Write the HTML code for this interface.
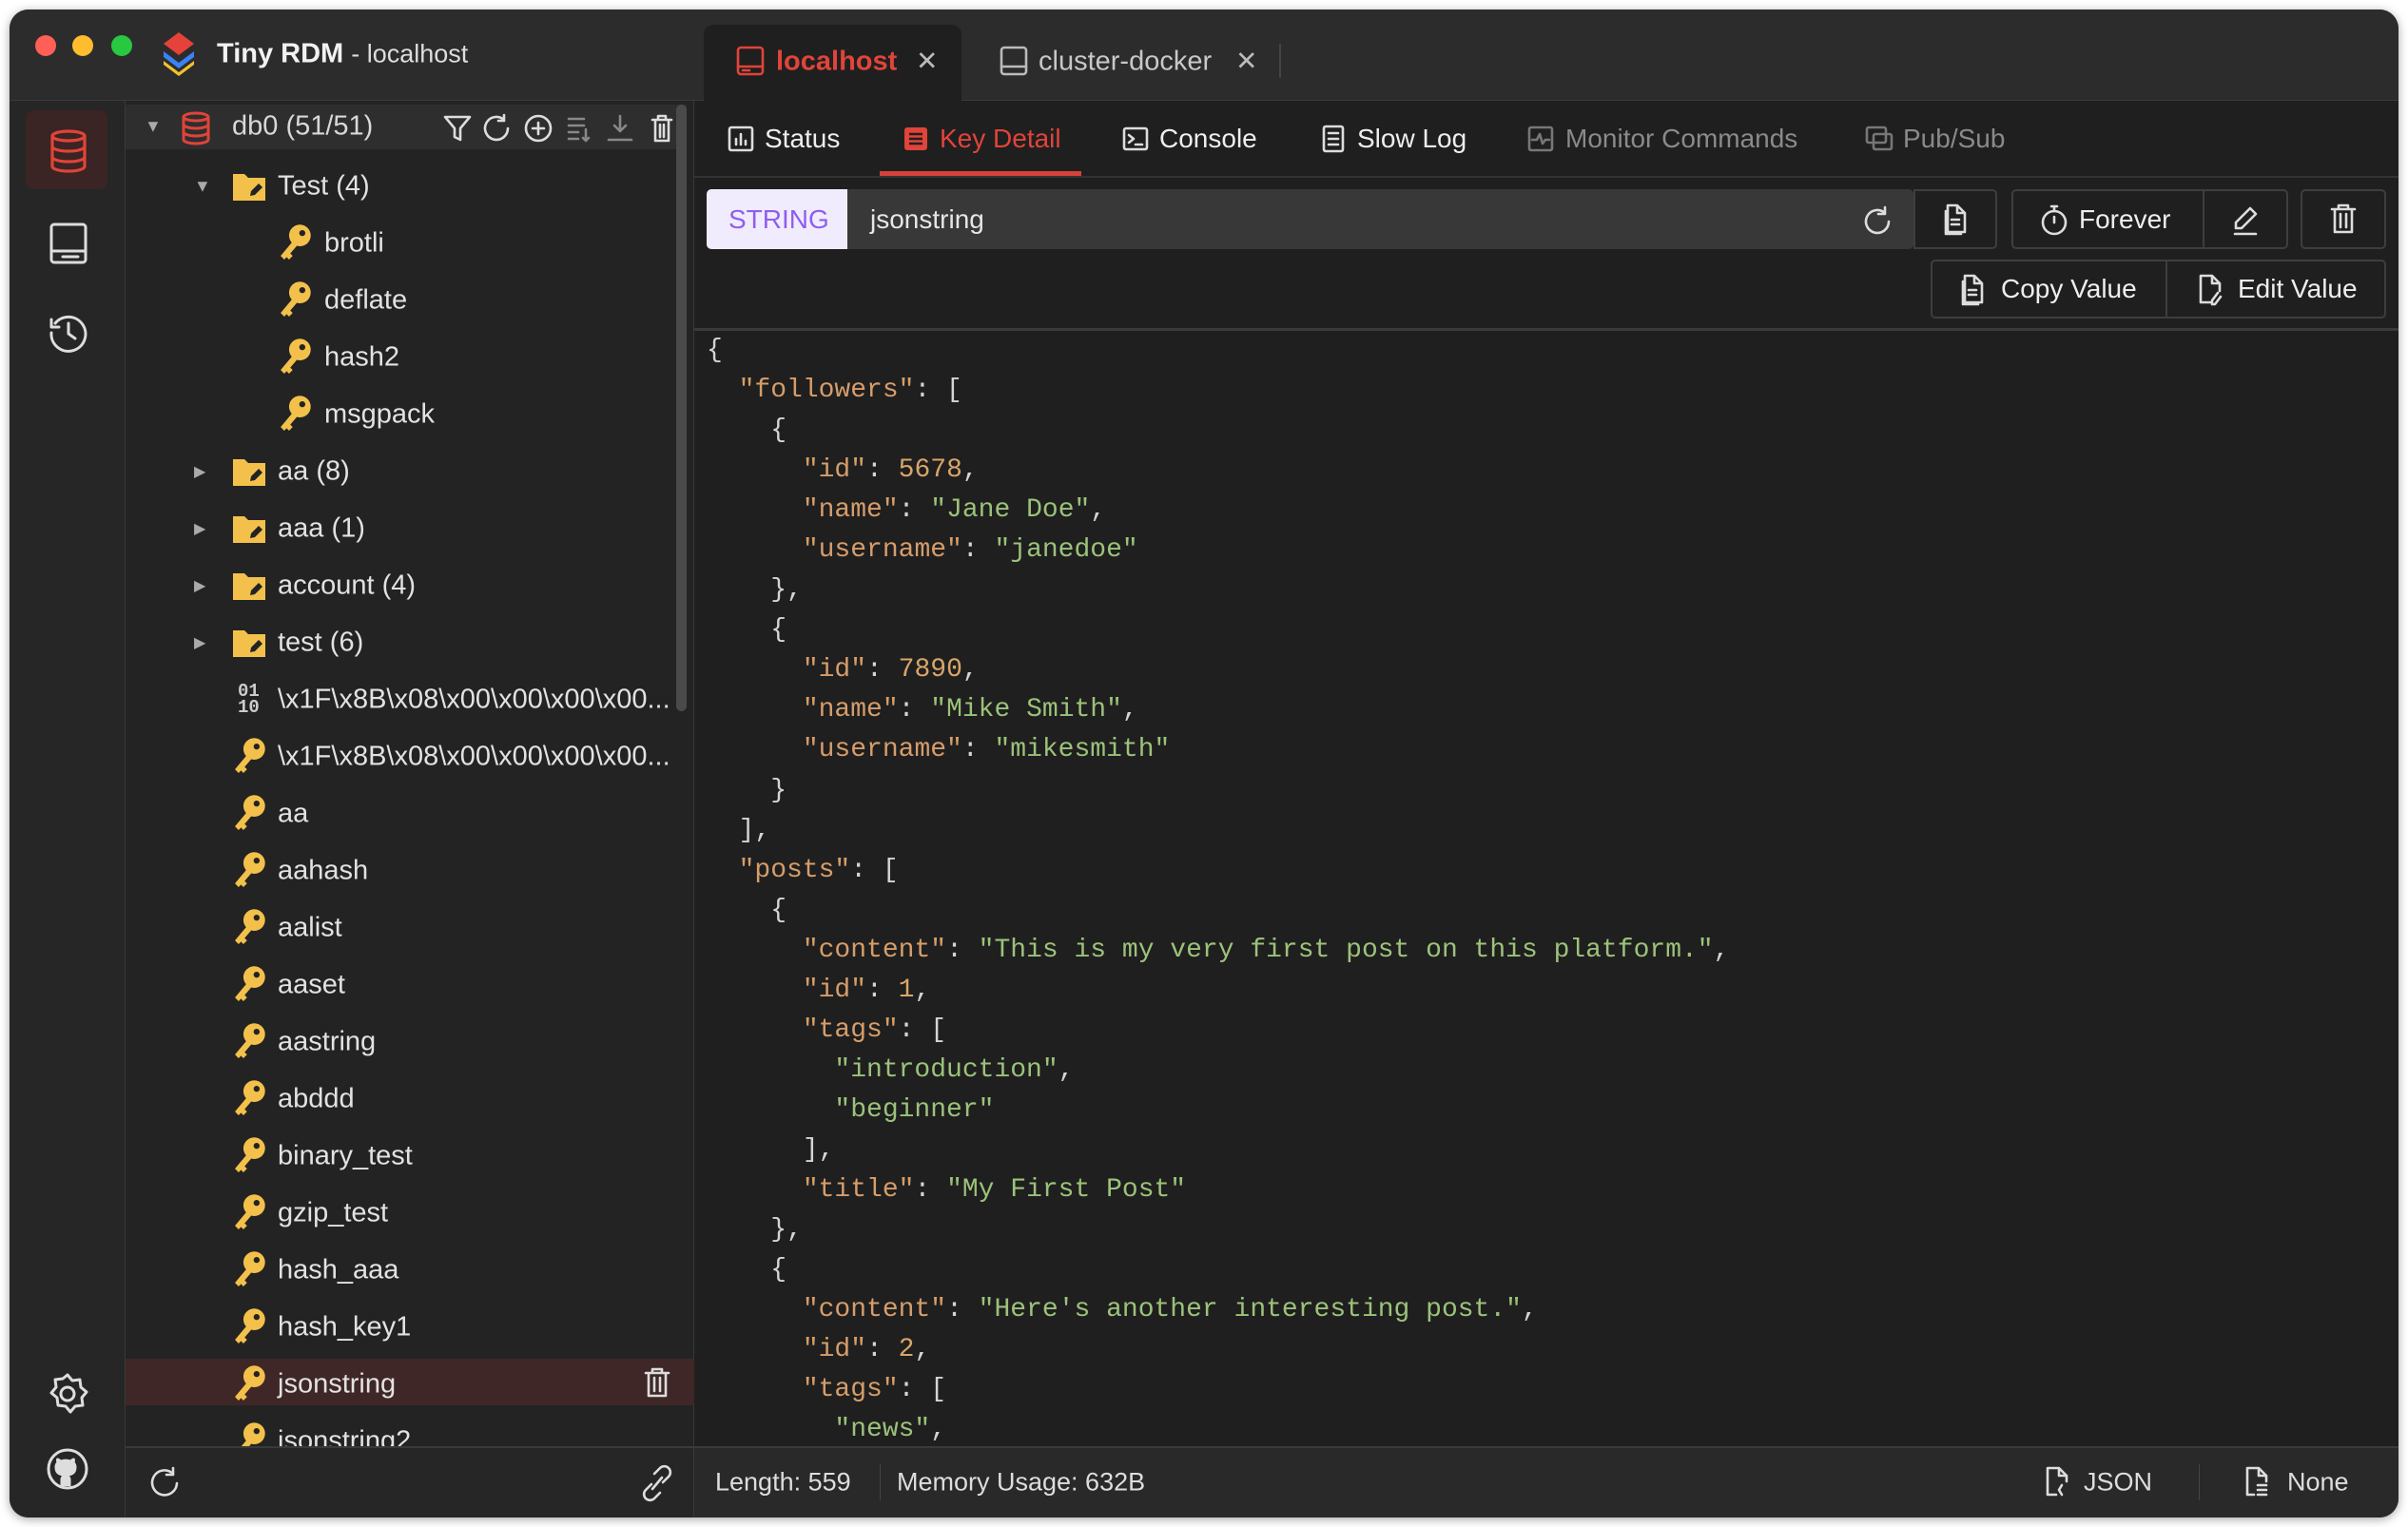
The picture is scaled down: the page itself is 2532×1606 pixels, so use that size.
<!DOCTYPE html>
<html><head><meta charset="utf-8"><style>
*{margin:0;padding:0;box-sizing:border-box}
body{width:2532px;height:1606px;background:#fff;position:relative;overflow:hidden;font-family:"Liberation Sans",sans-serif;color:#e6e6e6}
.win{position:absolute;left:10px;top:10px;width:2512px;height:1586px;border-radius:20px;background:#1f1f1f;overflow:hidden;box-shadow:0 2px 10px rgba(0,0,0,.35)}
.a{position:absolute}
.t{position:absolute;white-space:nowrap;transform:translateY(-50%)}
svg{position:absolute;overflow:visible}
.ic{fill:none;stroke:#ddd;stroke-width:2.6;stroke-linecap:round;stroke-linejoin:round}
pre{font-family:"Liberation Mono",monospace;font-size:28px;line-height:42.05px;color:#d4d4d4}
.k{color:#d69d6a}.s{color:#9cc27a}.n{color:#d9a56a}
.tr{font-size:29px;color:#e2e2e2}
svg.kk{width:38px;height:43px;margin:-5px 0 0 -6px}
</style></head><body>
<div class="win">
<!-- title bar -->
<div class="a" style="left:0;top:0;width:2512px;height:95px;background:#2c2c2c"></div>
<div class="a" style="left:0;top:95px;width:2512px;height:1px;background:#3a3a3a"></div>
<div class="a" style="left:27px;top:27px;width:22px;height:22px;border-radius:50%;background:#fe5f57"></div>
<div class="a" style="left:66px;top:27px;width:22px;height:22px;border-radius:50%;background:#febc2e"></div>
<div class="a" style="left:107px;top:27px;width:22px;height:22px;border-radius:50%;background:#28c840"></div>
<svg style="left:158px;top:22px" width="40" height="48" viewBox="0 0 40 48"><path d="M20 2 L36 14 L20 26 L4 14Z" fill="#e5423a"/><path d="M4 22 L20 34 L36 22 L36 28 L20 40 L4 28Z" fill="#3b82f6"/><path d="M4 32 L20 44 L36 32 L36 36 L20 48 L4 36Z" fill="#f2c12e"/></svg>
<div class="t" style="left:218px;top:47px;font-size:29px;font-weight:bold;color:#f2f2f2">Tiny RDM <span style="font-weight:normal;font-size:27px;color:#ddd">- localhost</span></div>
<!-- tabs -->
<div class="a" style="left:730px;top:16px;width:271px;height:80px;background:#1f1f1f;border-radius:10px 10px 0 0"></div>
<svg style="left:764px;top:38px" width="30" height="32" class="ic" viewBox="0 0 30 32"><rect x="2" y="2" width="26" height="28" rx="3" stroke="#e0443a"/><line x1="2" y1="22" x2="28" y2="22" stroke="#e0443a"/><line x1="7" y1="26" x2="14" y2="26" stroke="#e0443a"/></svg>
<div class="t" style="left:806px;top:55px;font-size:29px;font-weight:bold;color:#e0443a">localhost</div>
<div class="t" style="left:953px;top:54px;font-size:28px;color:#bbb">✕</div>
<svg style="left:1041px;top:38px" width="30" height="32" class="ic" viewBox="0 0 30 32"><rect x="2" y="2" width="26" height="28" rx="3" stroke="#bbb"/><line x1="2" y1="22" x2="28" y2="22" stroke="#bbb"/></svg>
<div class="t" style="left:1082px;top:55px;font-size:29px;color:#c8c8c8">cluster-docker</div>
<div class="t" style="left:1289px;top:54px;font-size:28px;color:#bbb">✕</div>
<div class="a" style="left:1335px;top:36px;width:2px;height:36px;background:#444"></div>

<!-- left bar -->
<div class="a" style="left:0;top:96px;width:122px;height:1490px;background:#262626;border-right:1px solid #383838"></div>
<div class="a" style="left:17px;top:106px;width:86px;height:83px;border-radius:8px;background:#3b2424"></div>
<svg style="left:42px;top:126px" width="40" height="46" class="ic" viewBox="0 0 40 46"><g stroke="#e0443a" stroke-width="3.2"><ellipse cx="20" cy="7" rx="17" ry="5"/><path d="M3 7v32c0 3 8 5 17 5s17-2 17-5V7"/><path d="M3 18c0 3 8 5 17 5s17-2 17-5M3 29c0 3 8 5 17 5s17-2 17-5"/></g></svg>
<svg style="left:42px;top:224px" width="40" height="44" class="ic" viewBox="0 0 40 44"><rect x="2" y="2" width="36" height="40" rx="3" stroke-width="3"/><line x1="2" y1="30" x2="38" y2="30" stroke-width="3"/><line x1="14" y1="36" x2="30" y2="36" stroke-width="3"/></svg>
<svg style="left:40px;top:318px" width="44" height="44" class="ic" viewBox="0 0 44 44"><path d="M8 12A18 18 0 1 1 4 22" stroke-width="3"/><path d="M4 8v8h8" stroke-width="3"/><path d="M22 12v11l7 5" stroke-width="3"/></svg>
<svg style="left:39px;top:1434px" width="44" height="44" class="ic" viewBox="0 0 44 44"><circle cx="22" cy="22" r="7" stroke-width="3"/><path d="M22 2l5 6 8-1 1 8 6 5-5 6 1 8-8 1-5 6-5-6-8-1-1-8-6-5 5-6-1-8 8-1z" stroke-width="3"/></svg>
<svg style="left:39px;top:1513px" width="44" height="44" class="ic" viewBox="0 0 44 44"><circle cx="22" cy="22" r="20" stroke-width="3"/><path d="M15 40v-7c0-2 1-3 2-4-5-1-8-3-8-9 0-2 1-4 2-5-1-2 0-4 0-4s2 0 4 2c3-1 7-1 10 0 2-2 4-2 4-2s1 2 0 4c1 1 2 3 2 5 0 6-3 8-8 9 1 1 2 2 2 4v7" fill="#ddd" stroke-width="1"/></svg>

<!-- sidebar -->
<div class="a" style="left:122px;top:96px;width:598px;height:1490px;background:#232323;border-right:1px solid #383838"></div>
<div class="a" style="left:122px;top:100px;width:590px;height:47px;background:#2e2e2e"></div>
<div class="a" style="left:701px;top:100px;width:11px;height:638px;border-radius:6px;background:#4a4a4a"></div>
<div class="t" style="left:142px;top:123px;font-size:18px;color:#aaa">▼</div>
<svg style="left:180px;top:108px" width="32" height="34" class="ic" viewBox="0 0 32 34"><g stroke="#e0443a" stroke-width="3"><ellipse cx="16" cy="5" rx="13" ry="4"/><path d="M3 5v24c0 2 6 4 13 4s13-2 13-4V5M3 13c0 2 6 4 13 4s13-2 13-4M3 21c0 2 6 4 13 4s13-2 13-4"/></g></svg>
<div class="t tr" style="left:234px;top:123px;color:#d8d8d8">db0 (51/51)</div>
<svg style="left:456px;top:110px" width="250" height="30" class="ic" viewBox="0 0 250 30"><path d="M2 3h26L18 15v12l-6-3V15z"/><path d="M64 6a12 12 0 1 0 4 9M64 1v6h-6"/><circle cx="100" cy="15" r="13"/><path d="M100 9v12M94 15h12"/><path d="M132 5h16M132 12h16M132 19h10M132 26h10M150 16v12l-3-3M150 28l3-3" stroke="#888"/><path d="M186 2v16l-6-6M186 18l6-6M174 27h24" stroke="#888"/><path d="M220 6h20M226 6V2h8v4M223 6v22h14V6M228 11v13M232 11v13"/></svg>

<div class="a" style="left:0;top:-8px">
<div class="t" style="left:194px;top:194px;font-size:18px;color:#aaa">▼</div>
<div class="t" style="left:194px;top:494px;font-size:16px;color:#aaa">▶</div>
<div class="t" style="left:194px;top:554px;font-size:16px;color:#aaa">▶</div>
<div class="t" style="left:194px;top:614px;font-size:16px;color:#aaa">▶</div>
<div class="t" style="left:194px;top:674px;font-size:16px;color:#aaa">▶</div>

<svg style="left:234px;top:176px" width="38" height="36" viewBox="0 0 38 34"><path d="M1 4h12l4 4h18v24H1z" fill="#f3c14b"/><path d="M20 22l8-8 4 4-8 8-5 1z" fill="#232323"/></svg>
<svg style="left:234px;top:476px" width="38" height="36" viewBox="0 0 38 34"><path d="M1 4h12l4 4h18v24H1z" fill="#f3c14b"/><path d="M20 22l8-8 4 4-8 8-5 1z" fill="#232323"/></svg>
<svg style="left:234px;top:536px" width="38" height="36" viewBox="0 0 38 34"><path d="M1 4h12l4 4h18v24H1z" fill="#f3c14b"/><path d="M20 22l8-8 4 4-8 8-5 1z" fill="#232323"/></svg>
<svg style="left:234px;top:596px" width="38" height="36" viewBox="0 0 38 34"><path d="M1 4h12l4 4h18v24H1z" fill="#f3c14b"/><path d="M20 22l8-8 4 4-8 8-5 1z" fill="#232323"/></svg>
<svg style="left:234px;top:656px" width="38" height="36" viewBox="0 0 38 34"><path d="M1 4h12l4 4h18v24H1z" fill="#f3c14b"/><path d="M20 22l8-8 4 4-8 8-5 1z" fill="#232323"/></svg>
<div class="t tr" style="left:282px;top:194px">Test (4)</div>
<div class="t tr" style="left:282px;top:494px">aa (8)</div>
<div class="t tr" style="left:282px;top:554px">aaa (1)</div>
<div class="t tr" style="left:282px;top:614px">account (4)</div>
<div class="t tr" style="left:282px;top:674px">test (6)</div>

<div class="a" style="left:122px;top:1427px;width:598px;height:49px;background:#3f2727"></div>
<svg style="left:667px;top:1436px" width="28" height="32" class="ic" viewBox="0 0 28 32"><path d="M2 6h24M9 6V2h10v4M5 6v24h18V6M11 11v14M17 11v14"/></svg>

<svg width="0" height="0"><defs><symbol id="key" viewBox="0 0 30 34"><circle cx="20" cy="10" r="9" fill="#f3c14b"/><path d="M14 15L4 27l3 3 2-2 2 2 3-3-2-2 6-7z" fill="#f3c14b"/><circle cx="22" cy="8" r="2.5" fill="#232323"/></symbol></defs></svg>
<svg class="kk" style="left:286px;top:238px"><use href="#key"/></svg><div class="t tr" style="left:331px;top:254px">brotli</div>
<svg class="kk" style="left:286px;top:298px"><use href="#key"/></svg><div class="t tr" style="left:331px;top:314px">deflate</div>
<svg class="kk" style="left:286px;top:358px"><use href="#key"/></svg><div class="t tr" style="left:331px;top:374px">hash2</div>
<svg class="kk" style="left:286px;top:418px"><use href="#key"/></svg><div class="t tr" style="left:331px;top:434px">msgpack</div>
<div class="t" style="left:240px;top:734px;font-size:19px;line-height:17px;font-family:'Liberation Mono',monospace;color:#ccc;font-weight:bold">01<br>10</div><div class="t tr" style="left:282px;top:734px">\x1F\x8B\x08\x00\x00\x00\x00...</div>
<svg class="kk" style="left:238px;top:778px"><use href="#key"/></svg><div class="t tr" style="left:282px;top:794px">\x1F\x8B\x08\x00\x00\x00\x00...</div>
<svg class="kk" style="left:238px;top:838px"><use href="#key"/></svg><div class="t tr" style="left:282px;top:854px">aa</div>
<svg class="kk" style="left:238px;top:898px"><use href="#key"/></svg><div class="t tr" style="left:282px;top:914px">aahash</div>
<svg class="kk" style="left:238px;top:958px"><use href="#key"/></svg><div class="t tr" style="left:282px;top:974px">aalist</div>
<svg class="kk" style="left:238px;top:1018px"><use href="#key"/></svg><div class="t tr" style="left:282px;top:1034px">aaset</div>
<svg class="kk" style="left:238px;top:1078px"><use href="#key"/></svg><div class="t tr" style="left:282px;top:1094px">aastring</div>
<svg class="kk" style="left:238px;top:1138px"><use href="#key"/></svg><div class="t tr" style="left:282px;top:1154px">abddd</div>
<svg class="kk" style="left:238px;top:1198px"><use href="#key"/></svg><div class="t tr" style="left:282px;top:1214px">binary_test</div>
<svg class="kk" style="left:238px;top:1258px"><use href="#key"/></svg><div class="t tr" style="left:282px;top:1274px">gzip_test</div>
<svg class="kk" style="left:238px;top:1318px"><use href="#key"/></svg><div class="t tr" style="left:282px;top:1334px">hash_aaa</div>
<svg class="kk" style="left:238px;top:1378px"><use href="#key"/></svg><div class="t tr" style="left:282px;top:1394px">hash_key1</div>
<svg class="kk" style="left:238px;top:1438px"><use href="#key"/></svg><div class="t tr" style="left:282px;top:1454px">jsonstring</div>
<svg class="kk" style="left:238px;top:1498px"><use href="#key"/></svg><div class="t tr" style="left:282px;top:1514px">jsonstring2</div>
</div>

<!-- sidebar bottom -->
<div class="a" style="left:122px;top:1511px;width:598px;height:75px;background:#262626;border-top:2px solid #3a3a3a;border-right:1px solid #383838"></div>
<svg style="left:146px;top:1532px" width="34" height="34" class="ic" viewBox="0 0 34 34"><path d="M26 8a13 13 0 1 0 4 10M26 2v7h-7"/></svg>
<svg style="left:664px;top:1532px" width="34" height="36" class="ic" viewBox="0 0 34 36"><path d="M14 8l6-6a6 6 0 0 1 9 9l-6 6M20 28l-6 6a6 6 0 0 1-9-9l6-6M12 24l10-12"/></svg>

<!-- sub tabs -->
<div class="a" style="left:720px;top:175px;width:1792px;height:2px;background:#333"></div>
<div class="a" style="left:915px;top:170px;width:212px;height:5px;background:#d8403a"></div>
<svg style="left:755px;top:122px" width="28" height="28" class="ic" viewBox="0 0 28 28"><rect x="2" y="2" width="24" height="24" rx="2"/><path d="M9 20v-6M14 20V9M19 20v-4"/></svg>
<div class="t" style="left:794px;top:136px;font-size:28px;color:#eee">Status</div>
<svg style="left:939px;top:122px" width="28" height="28" viewBox="0 0 28 28"><rect x="2" y="2" width="24" height="24" rx="3" fill="#e0443a"/><path d="M7 9h14M7 14h14M7 19h14" stroke="#1f1f1f" stroke-width="2.5"/></svg>
<div class="t" style="left:978px;top:136px;font-size:28px;color:#e0443a">Key Detail</div>
<svg style="left:1170px;top:122px" width="28" height="28" class="ic" viewBox="0 0 28 28"><rect x="2" y="3" width="24" height="22" rx="2"/><path d="M7 10l5 4-5 4M14 20h7"/></svg>
<div class="t" style="left:1209px;top:136px;font-size:28px;color:#eee">Console</div>
<svg style="left:1378px;top:121px" width="28" height="30" class="ic" viewBox="0 0 28 30"><rect x="4" y="2" width="20" height="26" rx="2"/><path d="M9 9h10M9 15h10M9 21h10"/></svg>
<div class="t" style="left:1417px;top:136px;font-size:28px;color:#eee">Slow Log</div>
<svg style="left:1596px;top:122px" width="28" height="28" class="ic" viewBox="0 0 28 28"><rect x="2" y="2" width="24" height="24" rx="2" stroke="#777"/><path d="M5 15h5l3-6 3 10 3-4h4" stroke="#777"/></svg>
<div class="t" style="left:1636px;top:136px;font-size:28px;color:#8a8a8a">Monitor Commands</div>
<svg style="left:1951px;top:122px" width="30" height="28" class="ic" viewBox="0 0 30 28"><rect x="2" y="2" width="20" height="16" rx="2" stroke="#777"/><rect x="9" y="9" width="19" height="16" rx="2" stroke="#777"/></svg>
<div class="t" style="left:1991px;top:136px;font-size:28px;color:#8a8a8a">Pub/Sub</div>

<!-- key row -->
<div class="a" style="left:733px;top:189px;width:1269px;height:63px;border-radius:5px;background:#383838"></div>
<div class="a" style="left:733px;top:189px;width:148px;height:63px;border-radius:5px 0 0 5px;background:#f1ecfd"></div>
<div class="t" style="left:756px;top:221px;font-size:28px;color:#8e5ff0">STRING</div>
<div class="t" style="left:905px;top:221px;font-size:28px;color:#e6e6e6">jsonstring</div>
<svg style="left:1948px;top:206px" width="32" height="32" class="ic" viewBox="0 0 32 32"><path d="M24 8a12 12 0 1 0 4 9M24 2v7h-7"/></svg>
<div class="a" style="left:2002px;top:189px;width:88px;height:63px;border:2px solid #3e3e3e;border-radius:0 5px 5px 0"></div>
<svg style="left:2032px;top:204px" width="28" height="34" class="ic" viewBox="0 0 28 34"><path d="M6 2h10l8 8v20H6zM16 2v8h8M4 8v24h16M10 17h8M10 22h8"/></svg>
<div class="a" style="left:2105px;top:189px;width:291px;height:63px;border:2px solid #3e3e3e;border-radius:5px"></div>
<div class="a" style="left:2306px;top:189px;width:2px;height:63px;background:#3e3e3e"></div>
<svg style="left:2135px;top:204px" width="30" height="34" class="ic" viewBox="0 0 30 34"><circle cx="15" cy="20" r="12"/><path d="M12 3h6M15 3v5M15 14v6"/></svg>
<div class="t" style="left:2176px;top:221px;font-size:28px;color:#eee">Forever</div>
<svg style="left:2336px;top:206px" width="30" height="32" class="ic" viewBox="0 0 30 32"><path d="M20 3l6 6L11 24H5v-6zM4 30h22"/></svg>
<div class="a" style="left:2409px;top:189px;width:90px;height:63px;border:2px solid #3e3e3e;border-radius:5px"></div>
<svg style="left:2440px;top:204px" width="28" height="32" class="ic" viewBox="0 0 28 32"><path d="M2 6h24M9 6V2h10v4M5 6v24h18V6M11 11v14M17 11v14"/></svg>

<div class="a" style="left:2020px;top:263px;width:479px;height:62px;border:2px solid #3e3e3e;border-radius:5px"></div>
<div class="a" style="left:2267px;top:263px;width:2px;height:62px;background:#3e3e3e"></div>
<svg style="left:2050px;top:278px" width="28" height="34" class="ic" viewBox="0 0 28 34"><path d="M6 2h10l8 8v20H6zM16 2v8h8M4 8v24h16M10 17h8M10 22h8"/></svg>
<div class="t" style="left:2094px;top:294px;font-size:28px;color:#eee">Copy Value</div>
<svg style="left:2300px;top:278px" width="28" height="34" class="ic" viewBox="0 0 28 34"><path d="M14 30H4V2h12l8 8v8M16 2v8h8M22 20l-6 8v4h3l6-8"/></svg>
<div class="t" style="left:2343px;top:294px;font-size:28px;color:#eee">Edit Value</div>

<div class="a" style="left:720px;top:335px;width:1792px;height:3px;background:#3a3a3a"></div>

<!-- json -->
<pre class="a" style="left:733px;top:338px;width:1770px;height:1173px;overflow:hidden">{
  <span class="k">"followers"</span>: [
    {
      <span class="k">"id"</span>: <span class="n">5678</span>,
      <span class="k">"name"</span>: <span class="s">"Jane Doe"</span>,
      <span class="k">"username"</span>: <span class="s">"janedoe"</span>
    },
    {
      <span class="k">"id"</span>: <span class="n">7890</span>,
      <span class="k">"name"</span>: <span class="s">"Mike Smith"</span>,
      <span class="k">"username"</span>: <span class="s">"mikesmith"</span>
    }
  ],
  <span class="k">"posts"</span>: [
    {
      <span class="k">"content"</span>: <span class="s">"This is my very first post on this platform."</span>,
      <span class="k">"id"</span>: <span class="n">1</span>,
      <span class="k">"tags"</span>: [
        <span class="s">"introduction"</span>,
        <span class="s">"beginner"</span>
      ],
      <span class="k">"title"</span>: <span class="s">"My First Post"</span>
    },
    {
      <span class="k">"content"</span>: <span class="s">"Here's another interesting post."</span>,
      <span class="k">"id"</span>: <span class="n">2</span>,
      <span class="k">"tags"</span>: [
        <span class="s">"news"</span>,
</pre>

<!-- status bar -->
<div class="a" style="left:720px;top:1511px;width:1792px;height:75px;background:#292929;border-top:2px solid #3a3a3a"></div>
<div class="t" style="left:742px;top:1549px;font-size:27px;color:#ddd">Length: 559</div>
<div class="a" style="left:915px;top:1530px;width:1px;height:38px;background:#444"></div>
<div class="t" style="left:933px;top:1549px;font-size:27px;color:#ddd">Memory Usage: 632B</div>
<svg style="left:2140px;top:1532px" width="26" height="34" class="ic" viewBox="0 0 26 34"><path d="M12 30H3V2h12l8 8v6M15 2v8h8M18 20l-3 5 3 5"/></svg>
<div class="t" style="left:2181px;top:1549px;font-size:27px;color:#ddd">JSON</div>
<div class="a" style="left:2302px;top:1530px;width:1px;height:38px;background:#444"></div>
<svg style="left:2350px;top:1532px" width="26" height="34" class="ic" viewBox="0 0 26 34"><path d="M10 30H3V2h12l8 8v6M15 2v8h8M14 20h9M14 25h9M14 30h9"/></svg>
<div class="t" style="left:2395px;top:1549px;font-size:27px;color:#ddd">None</div>
</div>
</body></html>
